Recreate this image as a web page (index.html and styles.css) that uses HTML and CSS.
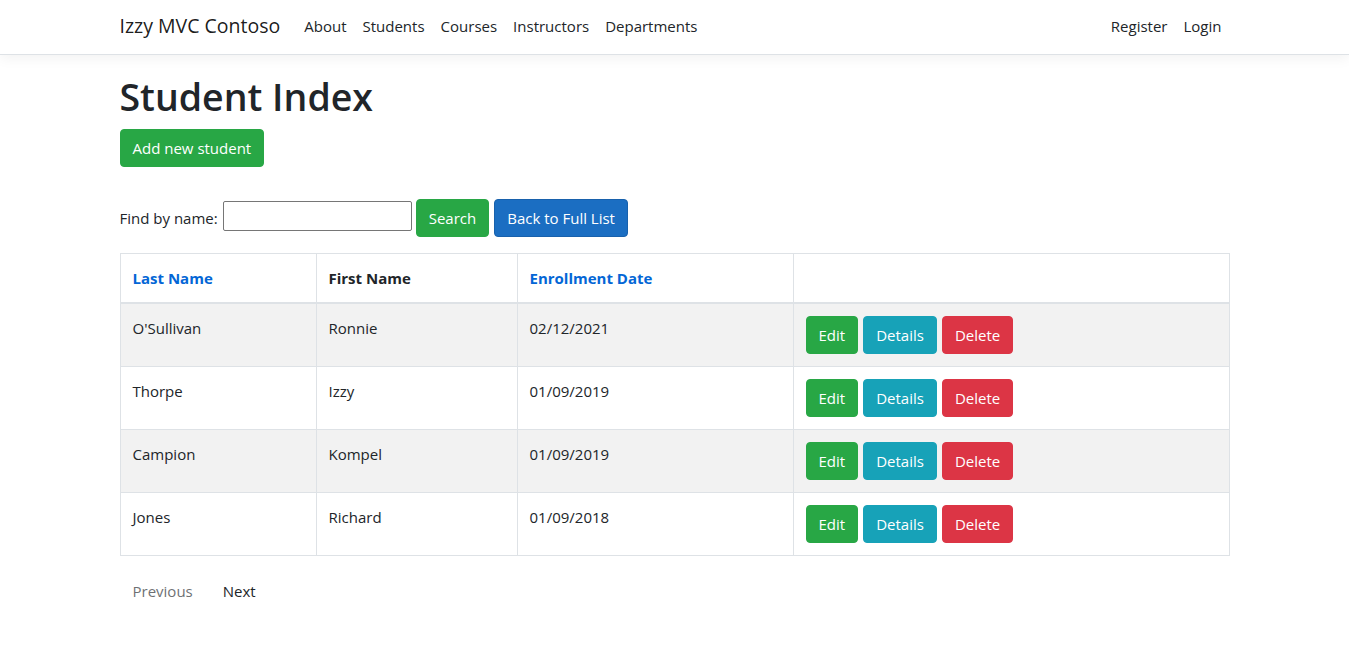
FILE: index.html
```html
<!DOCTYPE html>
<html lang="en">
<head>
<meta charset="utf-8">
<title>Student Index - Izzy MVC Contoso</title>
<link rel="stylesheet" href="styles.css">
</head>
<body>
<header>
  <nav class="navbar">
    <div class="container nav-inner">
      <a class="brand" href="#">Izzy MVC Contoso</a>
      <ul class="nav-list grow">
        <li><a class="nav-link" href="#">About</a></li>
        <li><a class="nav-link" href="#">Students</a></li>
        <li><a class="nav-link" href="#">Courses</a></li>
        <li><a class="nav-link" href="#">Instructors</a></li>
        <li><a class="nav-link" href="#">Departments</a></li>
      </ul>
      <ul class="nav-list">
        <li><a class="nav-link" href="#">Register</a></li>
        <li><a class="nav-link" href="#">Login</a></li>
      </ul>
    </div>
  </nav>
</header>
<main class="container">
  <h1 class="title">Student Index</h1>
  <p class="add-row"><a class="btn btn-success" href="#">Add new student</a></p>
  <form class="search-form">
    <p class="search-row">
      <label class="find-label" for="q">Find by name:</label>
      <input class="search-input" id="q" type="text">
      <button class="btn btn-success" type="button">Search</button>
      <a class="btn btn-primary" href="#">Back to Full List</a>
    </p>
  </form>
  <table class="table">
    <thead>
      <tr>
        <th class="c1"><a class="sort" href="#">Last Name</a></th>
        <th class="c2">First Name</th>
        <th class="c3"><a class="sort" href="#">Enrollment Date</a></th>
        <th class="c4"></th>
      </tr>
    </thead>
    <tbody>
      <tr class="odd">
        <td>O'Sullivan</td><td>Ronnie</td><td>02/12/2021</td>
        <td><div class="actions"><a class="btn btn-success" href="#">Edit</a><a class="btn btn-info" href="#">Details</a><a class="btn btn-danger" href="#">Delete</a></div></td>
      </tr>
      <tr>
        <td>Thorpe</td><td>Izzy</td><td>01/09/2019</td>
        <td><div class="actions"><a class="btn btn-success" href="#">Edit</a><a class="btn btn-info" href="#">Details</a><a class="btn btn-danger" href="#">Delete</a></div></td>
      </tr>
      <tr class="odd">
        <td>Campion</td><td>Kompel</td><td>01/09/2019</td>
        <td><div class="actions"><a class="btn btn-success" href="#">Edit</a><a class="btn btn-info" href="#">Details</a><a class="btn btn-danger" href="#">Delete</a></div></td>
      </tr>
      <tr>
        <td>Jones</td><td>Richard</td><td>01/09/2018</td>
        <td><div class="actions"><a class="btn btn-success" href="#">Edit</a><a class="btn btn-info" href="#">Details</a><a class="btn btn-danger" href="#">Delete</a></div></td>
      </tr>
    </tbody>
  </table>
  <div class="pager">
    <a class="btn btn-default disabled" href="#">Previous</a>
    <a class="btn btn-default" href="#">Next</a>
  </div>
</main>
</body>
</html>
```

FILE: styles.css
```css
* { box-sizing: border-box; }
html { font-size: 16px; }
body {
  margin: 0;
  font-family: "Open Sans", "Noto Sans", "Liberation Sans", sans-serif;
  font-size: 15px;
  line-height: 24px;
  color: #212529;
  background: #fff;
}
a { text-decoration: none; }
.container {
  width: 1140px;
  margin: 0 auto;
  padding: 0 15px;
}
.navbar {
  border-bottom: 1px solid #dee2e6;
  box-shadow: 0 .25rem .75rem rgba(0,0,0,.05);
  padding: 6px 0 8px;
  margin-bottom: 18px;
  background: #fff;
}
.nav-inner {
  display: flex;
  align-items: center;
}
.brand {
  font-size: 19.5px;
  line-height: 30px;
  color: rgba(0,0,0,.9);
  padding: 5px 0;
  margin-right: 16px;
  white-space: nowrap;
}
.nav-list {
  display: flex;
  list-style: none;
  margin: 0;
  padding: 0;
}
.grow { flex: 1; }
.nav-link {
  display: block;
  padding: 8px 8px;
  color: #212529;
  font-size: 15px;
  line-height: 24px;
}
.title {
  margin: 0 0 8px;
  font-size: 37.5px;
  font-weight: 600;
  line-height: 48px;
}
.add-row { margin: 0 0 32px; }
.search-form { margin: 0; }
.search-row {
  margin: 0 0 16px;
  display: flex;
  align-items: center;
}
.find-label { margin-right: 5px; }
.search-input {
  align-self: flex-start;
  margin-top: 2px;
  width: 189px;
  height: 30px;
  border: 1px solid #767676;
  border-radius: 2px;
  margin-right: 4px;
  font: inherit;
}
.search-row .btn-success { margin-right: 5px; }
.btn {
  display: inline-block;
  font-family: inherit;
  font-size: 15px;
  line-height: 24px;
  padding: 6px 12px;
  border: 1px solid transparent;
  border-radius: 4px;
  color: #fff;
  cursor: pointer;
  white-space: nowrap;
}
.btn-success { background: #28a745; border-color: #28a745; }
.btn-primary { background: #1b6ec2; border-color: #1861ac; }
.btn-info { background: #17a2b8; border-color: #17a2b8; }
.btn-danger { background: #dc3545; border-color: #dc3545; }
.btn-default { background: transparent; color: #212529; }
.btn-default.disabled { opacity: .65; }
.table {
  width: 1110px;
  border-collapse: collapse;
  margin-bottom: 16px;
  color: #212529;
}
.table th, .table td {
  border: 1px solid #dee2e6;
  padding: 12px;
  text-align: left;
  vertical-align: top;
}
.table thead th {
  border-bottom-width: 2px;
  font-weight: 700;
  vertical-align: bottom;
}
.c1 { width: 196px; }
.c2 { width: 201px; }
.c3 { width: 276px; }
.sort { color: #0366d6; }
.table tr.odd td { background: #f2f2f2; }
.actions { display: flex; gap: 5px; }
.pager { display: flex; gap: 4px; }
```
